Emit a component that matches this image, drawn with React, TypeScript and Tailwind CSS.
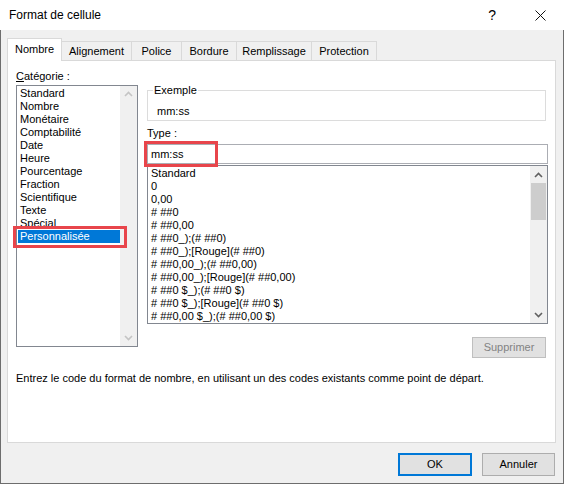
import React from 'react';

const categories = [
  'Standard', 'Nombre', 'Monétaire', 'Comptabilité', 'Date', 'Heure',
  'Pourcentage', 'Fraction', 'Scientifique', 'Texte', 'Spécial', 'Personnalisée',
];

const formats = [
  'Standard', '0', '0,00', '# ##0', '# ##0,00', '# ##0_);(# ##0)',
  '# ##0_);[Rouge](# ##0)', '# ##0,00_);(# ##0,00)', '# ##0,00_);[Rouge](# ##0,00)',
  '# ##0 $_);(# ##0 $)', '# ##0 $_);[Rouge](# ##0 $)', '# ##0,00 $_);(# ##0,00 $)',
];

const tabs = ['Nombre', 'Alignement', 'Police', 'Bordure', 'Remplissage', 'Protection'];
const tabW = ['w-[55px]', 'w-[70px]', 'w-[50px]', 'w-[55px]', 'w-[75px]', 'w-[65px]'];

function Chevron({ up, color }: { up?: boolean; color: string }) {
  return (
    <svg width="9" height="6" viewBox="0 0 9 6">
      <polyline
        points={up ? '1,5 4.5,1.5 8,5' : '1,1 4.5,4.5 8,1'}
        fill="none"
        stroke={color}
        strokeWidth="1.6"
      />
    </svg>
  );
}

export default function App() {
  return (
    <div className="w-[564px] h-[484px] flex flex-col bg-white text-[11px] leading-[15px] text-black font-['Liberation_Sans',Arial,sans-serif]">
      {/* title bar */}
      <div className="h-[30px] flex items-center justify-between pl-[9px] pr-[18px] shrink-0 text-[12px]">
        <span>Format de cellule</span>
        <div className="flex items-center gap-[39px]">
          <span className="text-[14px]">?</span>
          <svg width="11" height="11" viewBox="0 0 11 11">
            <path d="M0.5 0.5 L10.5 10.5 M10.5 0.5 L0.5 10.5" stroke="#111" strokeWidth="1" />
          </svg>
        </div>
      </div>

      <div className="flex-1 flex flex-col bg-[#f0f0f0] border-x border-b border-[#6d6d6d] pl-[6px] pr-[7px] pt-[8px]">
        {/* tabs */}
        <div className="flex items-end h-[22px]">
          {tabs.map((t, i) => (
            <div
              key={t}
              className={
                i === 0
                  ? `${tabW[i]} h-[23px] -mb-px relative z-10 bg-white border border-b-0 border-[#d9d9d9] flex items-center justify-center pb-[2px]`
                  : `${tabW[i]} h-[19px] bg-[#f0f0f0] border-t border-r border-[#d9d9d9] flex items-center justify-center`
              }
            >
              {t}
            </div>
          ))}
        </div>

        {/* panel */}
        <div className="h-[383px] bg-white border border-[#d9d9d9] pl-[8px] pt-[8px]">
          <div className="flex">
            {/* category column */}
            <div className="w-[122px]">
              <div>
                <span className="underline">C</span>atégorie :
              </div>
              <div className="relative mt-[1px] h-[262px] border border-[#828790] flex">
                <div className="flex-1 pt-[1px]">
                  {categories.map((c) => (
                    <div
                      key={c}
                      className={
                        c === 'Personnalisée'
                          ? 'h-[13px] leading-[13px] pl-[2px] ml-[1px] bg-[#0078d7] text-white'
                          : 'h-[13px] leading-[13px] pl-[3px]'
                      }
                    >
                      {c}
                    </div>
                  ))}
                </div>
                <div className="w-[17px] bg-[#f0f0f0] flex flex-col justify-between items-center py-[5px]">
                  <Chevron up color="#c4c4c4" />
                  <Chevron color="#c4c4c4" />
                </div>
                <div className="absolute left-[-4px] top-[140px] w-[114px] h-[22px] border-[3px] border-[#e8454b]" />
              </div>
            </div>

            {/* right column */}
            <div className="ml-[9px] w-[401px] flex flex-col">
              <fieldset className="mt-[14px] w-[399px] h-[38px] border border-[#dcdcdc] pl-[5px]">
                <legend className="px-[1px]">Exemple</legend>
                <div className="pl-[4px] pt-[6px]">mm:ss</div>
              </fieldset>
              <div className="mt-[5px]">Type :</div>
              <div className="relative mt-[3px] h-[20px] border border-[#abadb3] pl-[3px] flex items-center">
                mm:ss
                <div className="absolute left-[-4px] top-[-4px] w-[74px] h-[26px] border-[3px] border-[#e8454b]" />
              </div>
              <div className="mt-[1px] h-[159px] border border-[#828790] flex">
                <div className="flex-1 pt-[1px] pl-[3px] overflow-hidden">
                  {formats.map((f) => (
                    <div key={f} className="h-[13px] leading-[13px] whitespace-pre">
                      {f}
                    </div>
                  ))}
                </div>
                <div className="w-[17px] bg-[#f0f0f0] flex flex-col">
                  <div className="h-[17px] flex items-center justify-center">
                    <Chevron up color="#606060" />
                  </div>
                  <div className="mx-[1px] h-[37px] bg-[#cdcdcd]" />
                  <div className="flex-1" />
                  <div className="h-[17px] flex items-center justify-center">
                    <Chevron color="#606060" />
                  </div>
                </div>
              </div>
              <div className="flex justify-end mt-[13px] pr-[2px]">
                <div className="w-[74px] h-[21px] bg-[#e1e1e1] border border-[#bfbfbf] text-[#838383] flex items-center justify-center">
                  Supprimer
                </div>
              </div>
            </div>
          </div>
          <div className="mt-[13px]">
            Entrez le code du format de nombre, en utilisant un des codes existants comme point de départ.
          </div>
        </div>

        {/* bottom buttons */}
        <div className="flex justify-end gap-[10px] mt-[10px] pr-[1px]">
          <div className="w-[74px] h-[23px] bg-[#e1e1e1] border-2 border-[#0078d7] flex items-center justify-center">
            OK
          </div>
          <div className="w-[73px] h-[23px] bg-[#e1e1e1] border border-[#adadad] flex items-center justify-center">
            Annuler
          </div>
        </div>
      </div>
    </div>
  );
}
